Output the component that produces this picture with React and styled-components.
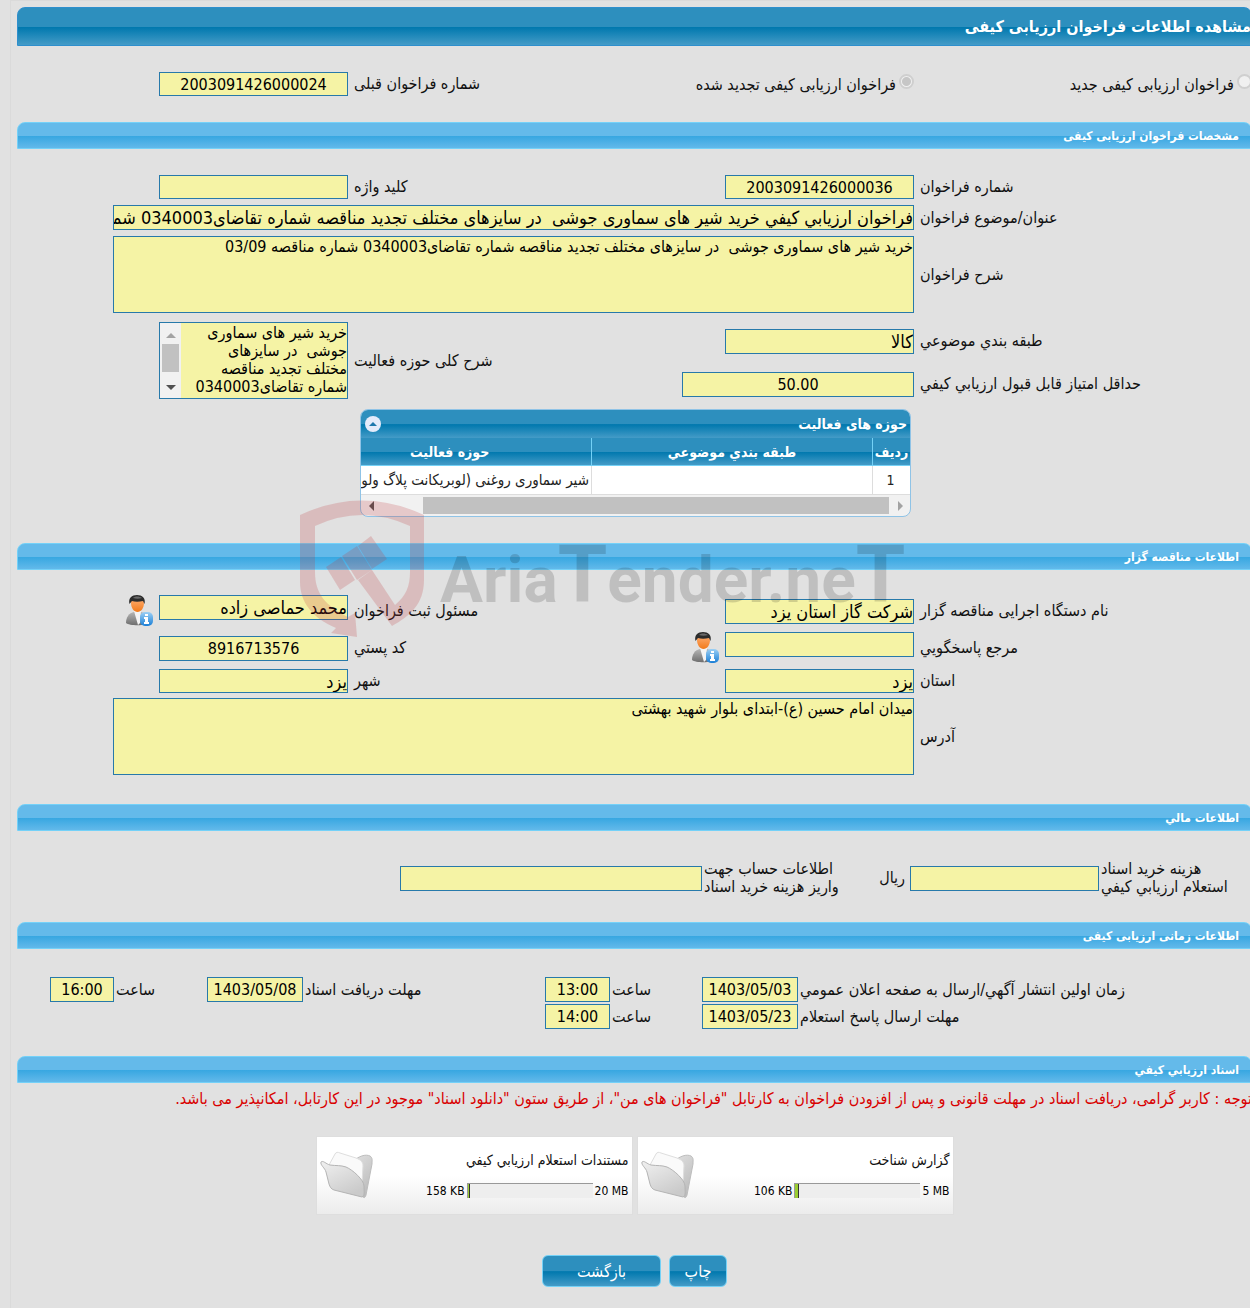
import React from "react";
import styled, { createGlobalStyle } from "styled-components";

const GlobalStyle = createGlobalStyle`
  *, *::before, *::after { box-sizing: border-box; }
  body {
    margin: 0;
    background: #e1e1e1;
    color: #111;
    font-family: "DejaVu Sans Condensed", "DejaVu Sans", sans-serif;
    font-size: 16px;
    line-height: 18px;
  }
  input, textarea, button { font-family: inherit; border-radius: 0; margin: 0; }
`;

const Page = styled.div`
  position: relative;
  overflow: hidden;
  padding-left: 10px;
`;

const Panel = styled.main`
  margin-right: -2px;
  padding: 6px 0 21px 6px;
  border: 1px solid #dadada;
  border-width: 1px 0 0 1px;
`;

const TitleBar = styled.h1`
  display: flex;
  align-items: center;
  height: 39px;
  margin: 0;
  border: 1px solid #2e8fcd;
  border-radius: 8px 8px 0 0;
  background: linear-gradient(#2d8fbe 0 50%, #0078ae 52%, #449bc7);
  color: #fff;
  font-size: 16px;
  font-weight: bold;
`;

const SectionBar = styled.h2`
  display: flex;
  align-items: center;
  height: 27px;
  margin: 0;
  padding-inline-start: 12px;
  border: 1px solid #74d1f8;
  border-radius: 8px 8px 0 0;
  background: linear-gradient(#64baea 0 50%, #37a7e1 52%, #62b9ea);
  color: #fff;
  font-size: 12px;
  font-weight: bold;
`;

const SectionBody = styled.section`
  display: flex;
  flex-direction: column;
  gap: ${(p) => p.$gap || 6}px;
  padding-top: ${(p) => p.$top || 26}px;
  padding-bottom: ${(p) => p.$bottom}px;
`;

const Row = styled.div`
  display: grid;
  grid-template-columns:
    minmax(0, 338fr) minmax(0, 232fr) minmax(0, 334fr) minmax(0, 331fr);
  grid-template-rows: ${(p) => p.$rows || "auto"};
  row-gap: 9px;
  align-items: center;
  padding-top: ${(p) => (p.$rows ? 3 : 0)}px;
`;

const Label = styled.label`
  grid-row: ${(p) => p.$row || "auto"};
  padding-left: 6px;
  text-align: left;
  white-space: nowrap;
`;

const Cell = styled.div`
  grid-column: ${(p) => p.$column || "auto"};
  grid-row: ${(p) => p.$row || "auto"};
  display: flex;
  align-items: flex-start;
  gap: 4px;
  min-width: 0;
`;

const TextInput = styled.input`
  flex: none;
  width: ${(p) => p.$width || 189}px;
  max-width: 100%;
  height: ${(p) => p.$height || 25}px;
  padding: 0;
  border: 1px solid #2779aa;
  background: #f5f3a5;
  color: #000;
  font-size: ${(p) => (p.$center ? 16 : 18)}px;
  text-align: ${(p) => (p.$center ? "center" : "right")};
`;

const TextArea = styled.textarea`
  display: block;
  width: 801px;
  max-width: 100%;
  height: 77px;
  padding: 1px 0 0;
  border: 1px solid #2779aa;
  background: #f5f3a5;
  color: #000;
  font-size: 16px;
  line-height: 18px;
  overflow: hidden;
  resize: none;
`;

const ScrollBox = styled.div`
  display: flex;
  width: 189px;
  height: 77px;
  border: 1px solid #2779aa;
  background: #f5f3a5;
`;

const ScrollText = styled(TextArea)`
  flex: 1;
  min-width: 0;
  height: 75px;
  padding-left: 8px;
  border: 0;
`;

const VerticalTrack = styled.div`
  display: flex;
  flex-direction: column;
  width: 21px;
  padding: 2px;
  background: #f1f1f1;
`;

const ScrollButton = styled.button`
  display: flex;
  align-items: center;
  justify-content: center;
  flex: none;
  width: 17px;
  height: 19px;
  padding: 0;
  border: 0;
  background: none;
  color: ${(p) => (p.$dim ? "#a3a3a3" : "#505050")};
`;

const VerticalThumb = styled.div`
  height: 28px;
  margin-bottom: auto;
  background: #c1c1c1;
`;

const RadioLabel = styled.label`
  display: flex;
  align-items: flex-start;
  gap: 3px;
  white-space: nowrap;
`;

const Radio = styled.input`
  appearance: none;
  flex: none;
  width: 15px;
  height: 15px;
  border: 2px solid #cfcfcf;
  border-radius: 50%;
  background: #f0f0f0;
  &:checked {
    background: radial-gradient(circle, #c6c6c6 0 4px, #f0f0f0 5px);
  }
`;

const RadioText = styled.span`
  padding-top: 2px;
`;

const Widget = styled.div`
  width: 551px;
  max-width: 100%;
  margin: 4px 3px 0 0;
  border: 1px solid #8fc3e6;
  border-radius: 8px;
  background: #f1f1f1;
  overflow: hidden;
`;

const WidgetHeader = styled.div`
  display: flex;
  align-items: center;
  justify-content: space-between;
  height: 28px;
  padding: 0 3px 0 4px;
  background: linear-gradient(#2d8fbe 0 50%, #0078ae 52%, #449bc7);
  color: #fff;
  font-size: 14px;
  font-weight: bold;
`;

const CollapseButton = styled.button`
  display: flex;
  align-items: center;
  justify-content: center;
  width: 16px;
  height: 16px;
  padding: 0;
  border: 0;
  border-radius: 50%;
  background: #e4ebfa;
  color: #1f78ad;
`;

const Table = styled.table`
  width: 100%;
  border-collapse: separate;
  border-spacing: 0;
  table-layout: fixed;
`;

const HeadCell = styled.th`
  width: ${(p) => (p.$width ? `${p.$width}px` : "auto")};
  height: 28px;
  padding: 0 0 0 ${(p) => (p.$last ? 49 : 0)}px;
  border-bottom: 1px solid #74d1f6;
  border-left: ${(p) => (p.$last ? 0 : 1)}px solid #74d1f6;
  background: linear-gradient(#2d8fbe 0 50%, #0078ae 52%, #449bc7);
  color: #fff;
  font-size: 14px;
  text-align: ${(p) => (p.$last ? "left" : "center")};
  white-space: nowrap;
`;

const DataCell = styled.td`
  height: 29px;
  padding: 0 2px 0 0;
  border-bottom: 1px solid #ddd;
  border-left: ${(p) => (p.$last ? 0 : 1)}px solid #ddd;
  background: #fff;
  color: #222;
  font-size: ${(p) => (p.$center ? 14 : 15)}px;
  text-align: ${(p) => (p.$center ? "center" : "right")};
  white-space: nowrap;
  overflow: hidden;
`;

const HorizontalTrack = styled.div`
  display: flex;
  align-items: center;
  justify-content: space-between;
  height: 21px;
  padding: 2px 2px;
`;

const HorizontalThumb = styled.div`
  width: 466px;
  height: 17px;
  margin-inline: 2px auto;
  background: #c1c1c1;
`;

const FinanceRow = styled.div`
  display: grid;
  grid-template-columns: 153fr 189px 208fr 302px 383fr;
  align-items: center;
  padding-top: 3px;
`;

const TightLabel = styled.label`
  padding-left: 2px;
  text-align: left;
  white-space: nowrap;
`;

const LineLabel = styled(TightLabel)`
  display: flex;
  flex-direction: column;
  align-items: flex-end;
`;

const UnitAndLabel = styled.div`
  display: flex;
  align-items: center;
  justify-content: space-between;
  padding-right: 5px;
`;

const TimeRow = styled.div`
  display: grid;
  grid-template-columns: 454fr 96px 92fr 65px 242fr 96px 93fr 64px 33fr;
  align-items: center;
`;

const Notice = styled.p`
  margin: 0;
  padding-top: 7px;
  color: #d90000;
  white-space: nowrap;
`;

const Cards = styled.div`
  display: flex;
  justify-content: center;
  gap: 4px;
  padding-top: 28px;
`;

const Card = styled.article`
  display: flex;
  align-items: center;
  justify-content: space-between;
  width: 317px;
  height: 79px;
  padding: 0 3px 2px;
  border: 1px solid #dedede;
  background: linear-gradient(#fff 50%, #ececec);
`;

const CardBody = styled.div`
  display: flex;
  flex-direction: column;
  gap: 14px;
`;

const CardTitle = styled.h3`
  margin: 0;
  font-size: 14px;
  font-weight: normal;
  line-height: 18px;
`;

const Usage = styled.div`
  display: flex;
  align-items: center;
  gap: 2px;
  color: #000;
  font-size: 12px;
  line-height: 16px;
`;

const Gauge = styled.div`
  width: 126px;
  height: 15px;
  border-top: 1px solid #999;
  border-left: 1px solid #999;
  background: #eee;
  direction: ltr;
`;

const GaugeFill = styled.div`
  height: 100%;
  border-right: 1px solid #333;
  background: #9acd32;
`;

const Actions = styled.div`
  display: flex;
  justify-content: center;
  gap: 8px;
  padding: 40px 0 0;
`;

const Button = styled.button`
  width: ${(p) => p.$width}px;
  height: 32px;
  padding: 0;
  border: 1px solid #74d1f6;
  border-radius: 6px;
  background: linear-gradient(#2d8fbe 0 50%, #0078ae 52%, #449bc7);
  color: #fff;
  font-size: 16px;
`;

const Watermark = styled.svg`
  position: absolute;
  top: 498px;
  left: 298px;
  direction: ltr;
  pointer-events: none;
`;

const IconButton = styled.button`
  display: block;
  width: 30px;
  height: 32px;
  padding: 0;
  border: 0;
  background: none;
`;

function Arrow({ d }) {
  return (
    <svg width="10" height="10" viewBox="0 0 10 10" aria-hidden="true">
      <path d={d} fill="currentColor" />
    </svg>
  );
}

function PersonInfo() {
  return (
    <IconButton type="button" aria-label="اطلاعات شخص">
      <svg width="30" height="32" viewBox="0 0 30 32">
        <defs>
          <linearGradient id="suit" x1="0" x2="0" y1="0" y2="1">
            <stop offset="0" stopColor="#b5b5b5" />
            <stop offset="1" stopColor="#6e6e6e" />
          </linearGradient>
          <linearGradient id="skin" x1="0" x2="0" y1="0" y2="1">
            <stop offset="0" stopColor="#ffb27a" />
            <stop offset="1" stopColor="#f27a1a" />
          </linearGradient>
          <linearGradient id="badge" x1="0" x2="0" y1="0" y2="1">
            <stop offset="0" stopColor="#9cd0f5" />
            <stop offset="1" stopColor="#1b7fd6" />
          </linearGradient>
        </defs>
        <path d="M1 28c0-6 3-10 8-11h7c5 1 8 5 8 11-3 3-20 3-23 0z" fill="url(#suit)" />
        <path d="M9 16h7l-1 12-2 2z" fill="#f4f4f4" />
        <path d="M6 8c0-4 3-6 6-6s7 2 7 6c0 5-3 9-6.500 9S6 13 6 8z" fill="url(#skin)" />
        <path d="M4.500 9C3 3 7 0 12 0s9 3 7.500 9l-1.500-3c-4 1-8 1-11 0z" fill="#2c2c2c" />
        <path d="M8 3c2-2 6-2 9 0-3 1-6 1-9 0z" fill="#6a6a6a" />
        <rect x="15" y="17" width="13" height="14" rx="5" fill="url(#badge)" />
        <path d="M20 19h3v2h-3zM19 22h4v5h1v2h-5v-2h1v-3h-1z" fill="#fff" />
      </svg>
    </IconButton>
  );
}

function Folder() {
  return (
    <svg width="54" height="50" viewBox="0 0 54 50" aria-hidden="true">
      <defs>
        <linearGradient id="flap" x1="0" x2="0.600" y1="0" y2="1">
          <stop offset="0" stopColor="#f0f0f0" />
          <stop offset="1" stopColor="#cacaca" />
        </linearGradient>
        <linearGradient id="back" x1="0" x2="1" y1="0" y2="1">
          <stop offset="0" stopColor="#f0f0f0" />
          <stop offset="1" stopColor="#b5b5b5" />
        </linearGradient>
      </defs>
      <path
        d="M12 14L36 9C40 6 46 4 50 6C53 8 52 11 52 14L46 45C45 48 44 48 43 47z"
        fill="url(#back)"
        stroke="#bdbdbd"
      />
      <path
        d="M9 15L15 4C16 2 18 2 20 3L36 8C41 10 43 12 43 16L42 33L30 22z"
        fill="#fafafa"
        stroke="#dedede"
      />
      <path
        d="M1 12C3 10 6 14 10 15C17 16 20 15 26 17C33 20 44 30 44 36C44 41 45 46 42 47L14 40C11 39 10 37 9 34L6 22C5 18 0 15 1 12z"
        fill="url(#flap)"
        stroke="#b4b4b4"
      />
    </svg>
  );
}

function BrandMark() {
  return (
    <Watermark width="620" height="142" viewBox="0 0 620 142" aria-hidden="true">
      <g fill="#c0393f" fillOpacity="0.220">
        <path d="M2 17Q64-12 126 17V82C126 106 112 118 94 128L60 82L74 72L97 107C108 98 112 88 112 74V28Q64 6 17 28V74C17 96 28 108 50 119L57 115L59 139L33 135L38 130C14 120 2 104 2 84z" />
        <path d="M28 69l15-10 14 23-15 10z" />
        <path d="M44 58l15-10 15 24-15 10z" />
        <path d="M60 48l13-10 16 23-15 10z" />
      </g>
      <text
        x="142"
        y="104"
        fontFamily="Roboto, 'Liberation Sans', sans-serif"
        fontWeight="bold"
        fontSize="64"
        fill="#000"
        fillOpacity="0.150"
      >
        Aria<tspan fontSize="80">T</tspan>ender.ne<tspan fontSize="80">T</tspan>
      </text>
    </Watermark>
  );
}

function Field({ id, label, value = "", row, center, width, height, icon, column }) {
  return (
    <>
      <Label htmlFor={id} $row={row}>{label}</Label>
      <Cell $row={row} $column={column}>
        <TextInput id={id} defaultValue={value} readOnly $center={center} $width={width} $height={height} />
        {icon && <PersonInfo />}
      </Cell>
    </>
  );
}

function FileCard({ title, limit, used, share }) {
  return (
    <Card>
      <CardBody>
        <CardTitle>{title}</CardTitle>
        <Usage>
          <bdi>{limit}</bdi>
          <Gauge role="progressbar" aria-label={title} aria-valuenow={share}>
            <GaugeFill style={{ width: `${share + 1}%` }} />
          </Gauge>
          <bdi>{used}</bdi>
        </Usage>
      </CardBody>
      <Folder />
    </Card>
  );
}

const DESCRIPTION =
  "خرید شیر های سماوری جوشی  در سایزهای مختلف تجدید مناقصه شماره تقاضای0340003 شماره مناقصه 03/09";

export default function App() {
  return (
    <Page dir="rtl" lang="fa">
      <GlobalStyle />
      <Panel>
        <TitleBar>مشاهده اطلاعات فراخوان ارزیابی کیفی</TitleBar>
        <SectionBody $bottom={26}>
          <Row>
            <RadioLabel>
              <Radio type="radio" name="kind" disabled />
              <RadioText>فراخوان ارزیابی کیفی جدید</RadioText>
            </RadioLabel>
            <RadioLabel>
              <Radio type="radio" name="kind" defaultChecked disabled />
              <RadioText>فراخوان ارزیابی کیفی تجدید شده</RadioText>
            </RadioLabel>
            <Field id="previous" label="شماره فراخوان قبلی" value="2003091426000024" center height={24} />
          </Row>
        </SectionBody>

        <SectionBar>مشخصات فراخوان ارزیابی کیفی</SectionBar>
        <SectionBody $bottom={26}>
          <Row>
            <Field id="number" label="شماره فراخوان" value="2003091426000036" center height={24} />
            <Field id="keyword" label="کلید واژه" height={24} />
          </Row>
          <Row>
            <Field
              id="subject"
              label="عنوان/موضوع فراخوان"
              value={"فراخوان ارزيابي كيفي " + DESCRIPTION}
              width={801}
              column="2 / 5"
            />
          </Row>
          <Row>
            <Label htmlFor="description">شرح فراخوان</Label>
            <Cell $column="2 / 5">
              <TextArea id="description" readOnly defaultValue={DESCRIPTION} />
            </Cell>
          </Row>
          <Row $rows="38px 30px">
            <Field id="category" label="طبقه بندي موضوعي" value="كالا" row="1" />
            <Label htmlFor="scope" $row="1 / 3">شرح کلی حوزه فعالیت</Label>
            <Cell $row="1 / 3">
              <ScrollBox>
                <ScrollText id="scope" readOnly defaultValue={DESCRIPTION} />
                <VerticalTrack>
                  <ScrollButton type="button" aria-label="بالا" $dim>
                    <Arrow d="M0 8L5 3l5 5z" />
                  </ScrollButton>
                  <VerticalThumb />
                  <ScrollButton type="button" aria-label="پایین">
                    <Arrow d="M0 3l5 5 5-5z" />
                  </ScrollButton>
                </VerticalTrack>
              </ScrollBox>
            </Cell>
            <Field
              id="score"
              label="حداقل امتياز قابل قبول ارزيابي كيفي"
              value="50.00"
              row="2"
              center
              width={232}
            />
          </Row>
          <Row>
            <Cell $column="2 / 5">
              <Widget>
                <WidgetHeader>
                  حوزه های فعالیت
                  <CollapseButton type="button" aria-label="بستن">
                    <Arrow d="M1 7l4-4 4 4z" />
                  </CollapseButton>
                </WidgetHeader>
                <Table>
                  <thead>
                    <tr>
                      <HeadCell $width={38}>ردیف</HeadCell>
                      <HeadCell $width={281}>طبقه بندي موضوعي</HeadCell>
                      <HeadCell $last>حوزه فعاليت</HeadCell>
                    </tr>
                  </thead>
                  <tbody>
                    <tr>
                      <DataCell $center>1</DataCell>
                      <DataCell />
                      <DataCell $last>شیر سماوری روغنی (لوبریکانت پلاگ ولو</DataCell>
                    </tr>
                  </tbody>
                </Table>
                <HorizontalTrack>
                  <ScrollButton type="button" aria-label="راست" $dim>
                    <Arrow d="M3 0l5 5-5 5z" />
                  </ScrollButton>
                  <HorizontalThumb />
                  <ScrollButton type="button" aria-label="چپ">
                    <Arrow d="M7 0L2 5l5 5z" />
                  </ScrollButton>
                </HorizontalTrack>
              </Widget>
            </Cell>
          </Row>
        </SectionBody>

        <SectionBar>اطلاعات مناقصه گزار</SectionBar>
        <SectionBody $gap={5} $top={25} $bottom={29}>
          <Row>
            <Field id="agency" label="نام دستگاه اجرایی مناقصه گزار" value="شرکت گاز استان یزد" />
            <Field id="registrar" label="مسئول ثبت فراخوان" value="محمد حماصی زاده" icon />
          </Row>
          <Row>
            <Field id="contact" label="مرجع پاسخگويي" icon />
            <Field id="postcode" label="كد پستي" value="8916713576" center />
          </Row>
          <Row>
            <Field id="province" label="استان" value="یزد" height={24} />
            <Field id="city" label="شهر" value="یزد" height={24} />
          </Row>
          <Row>
            <Label htmlFor="address">آدرس</Label>
            <Cell $column="2 / 5">
              <TextArea
                id="address"
                readOnly
                defaultValue="میدان امام حسین (ع)-ابتدای بلوار شهید بهشتی"
              />
            </Cell>
          </Row>
        </SectionBody>

        <SectionBar>اطلاعات مالي</SectionBar>
        <SectionBody $bottom={26}>
          <FinanceRow>
            <LineLabel htmlFor="cost">
              <span>هزینه خرید اسناد</span>
              <span>استعلام ارزيابي كيفي</span>
            </LineLabel>
            <TextInput id="cost" readOnly />
            <UnitAndLabel>
              <span>ریال</span>
              <LineLabel htmlFor="account">
                <span>اطلاعات حساب جهت</span>
                <span>واریز هزینه خرید اسناد</span>
              </LineLabel>
            </UnitAndLabel>
            <TextInput id="account" readOnly $width={302} />
          </FinanceRow>
        </SectionBody>

        <SectionBar>اطلاعات زمانی ارزیابی کیفی</SectionBar>
        <SectionBody $gap={2} $top={28} $bottom={27}>
          <TimeRow>
            <TightLabel htmlFor="publish">زمان اولين انتشار آگهي/ارسال به صفحه اعلان عمومي</TightLabel>
            <TextInput id="publish" readOnly $center $width={96} defaultValue="1403/05/03" />
            <TightLabel htmlFor="publishHour">ساعت</TightLabel>
            <TextInput id="publishHour" readOnly $center $width={65} defaultValue="13:00" />
            <TightLabel htmlFor="receive">مهلت دریافت اسناد</TightLabel>
            <TextInput id="receive" readOnly $center $width={96} defaultValue="1403/05/08" />
            <TightLabel htmlFor="receiveHour">ساعت</TightLabel>
            <TextInput id="receiveHour" readOnly $center $width={64} defaultValue="16:00" />
          </TimeRow>
          <TimeRow>
            <TightLabel htmlFor="reply">مهلت ارسال پاسخ استعلام</TightLabel>
            <TextInput id="reply" readOnly $center $width={96} defaultValue="1403/05/23" />
            <TightLabel htmlFor="replyHour">ساعت</TightLabel>
            <TextInput id="replyHour" readOnly $center $width={65} defaultValue="14:00" />
          </TimeRow>
        </SectionBody>

        <SectionBar>اسناد ارزيابي كيفي</SectionBar>
        <Notice>
          توجه : کاربر گرامی، دریافت اسناد در مهلت قانونی و پس از افزودن فراخوان به کارتابل "فراخوان های من"، از
          طریق ستون "دانلود اسناد" موجود در این کارتابل، امکانپذیر می باشد.
        </Notice>
        <Cards>
          <FileCard title="گزارش شناخت" limit="5 MB" used="106 KB" share={2} />
          <FileCard title="مستندات استعلام ارزيابي كيفي" limit="20 MB" used="158 KB" share={1} />
        </Cards>
        <Actions>
          <Button type="button" $width={58}>چاپ</Button>
          <Button type="button" $width={119}>بازگشت</Button>
        </Actions>
      </Panel>
      <BrandMark />
    </Page>
  );
}
